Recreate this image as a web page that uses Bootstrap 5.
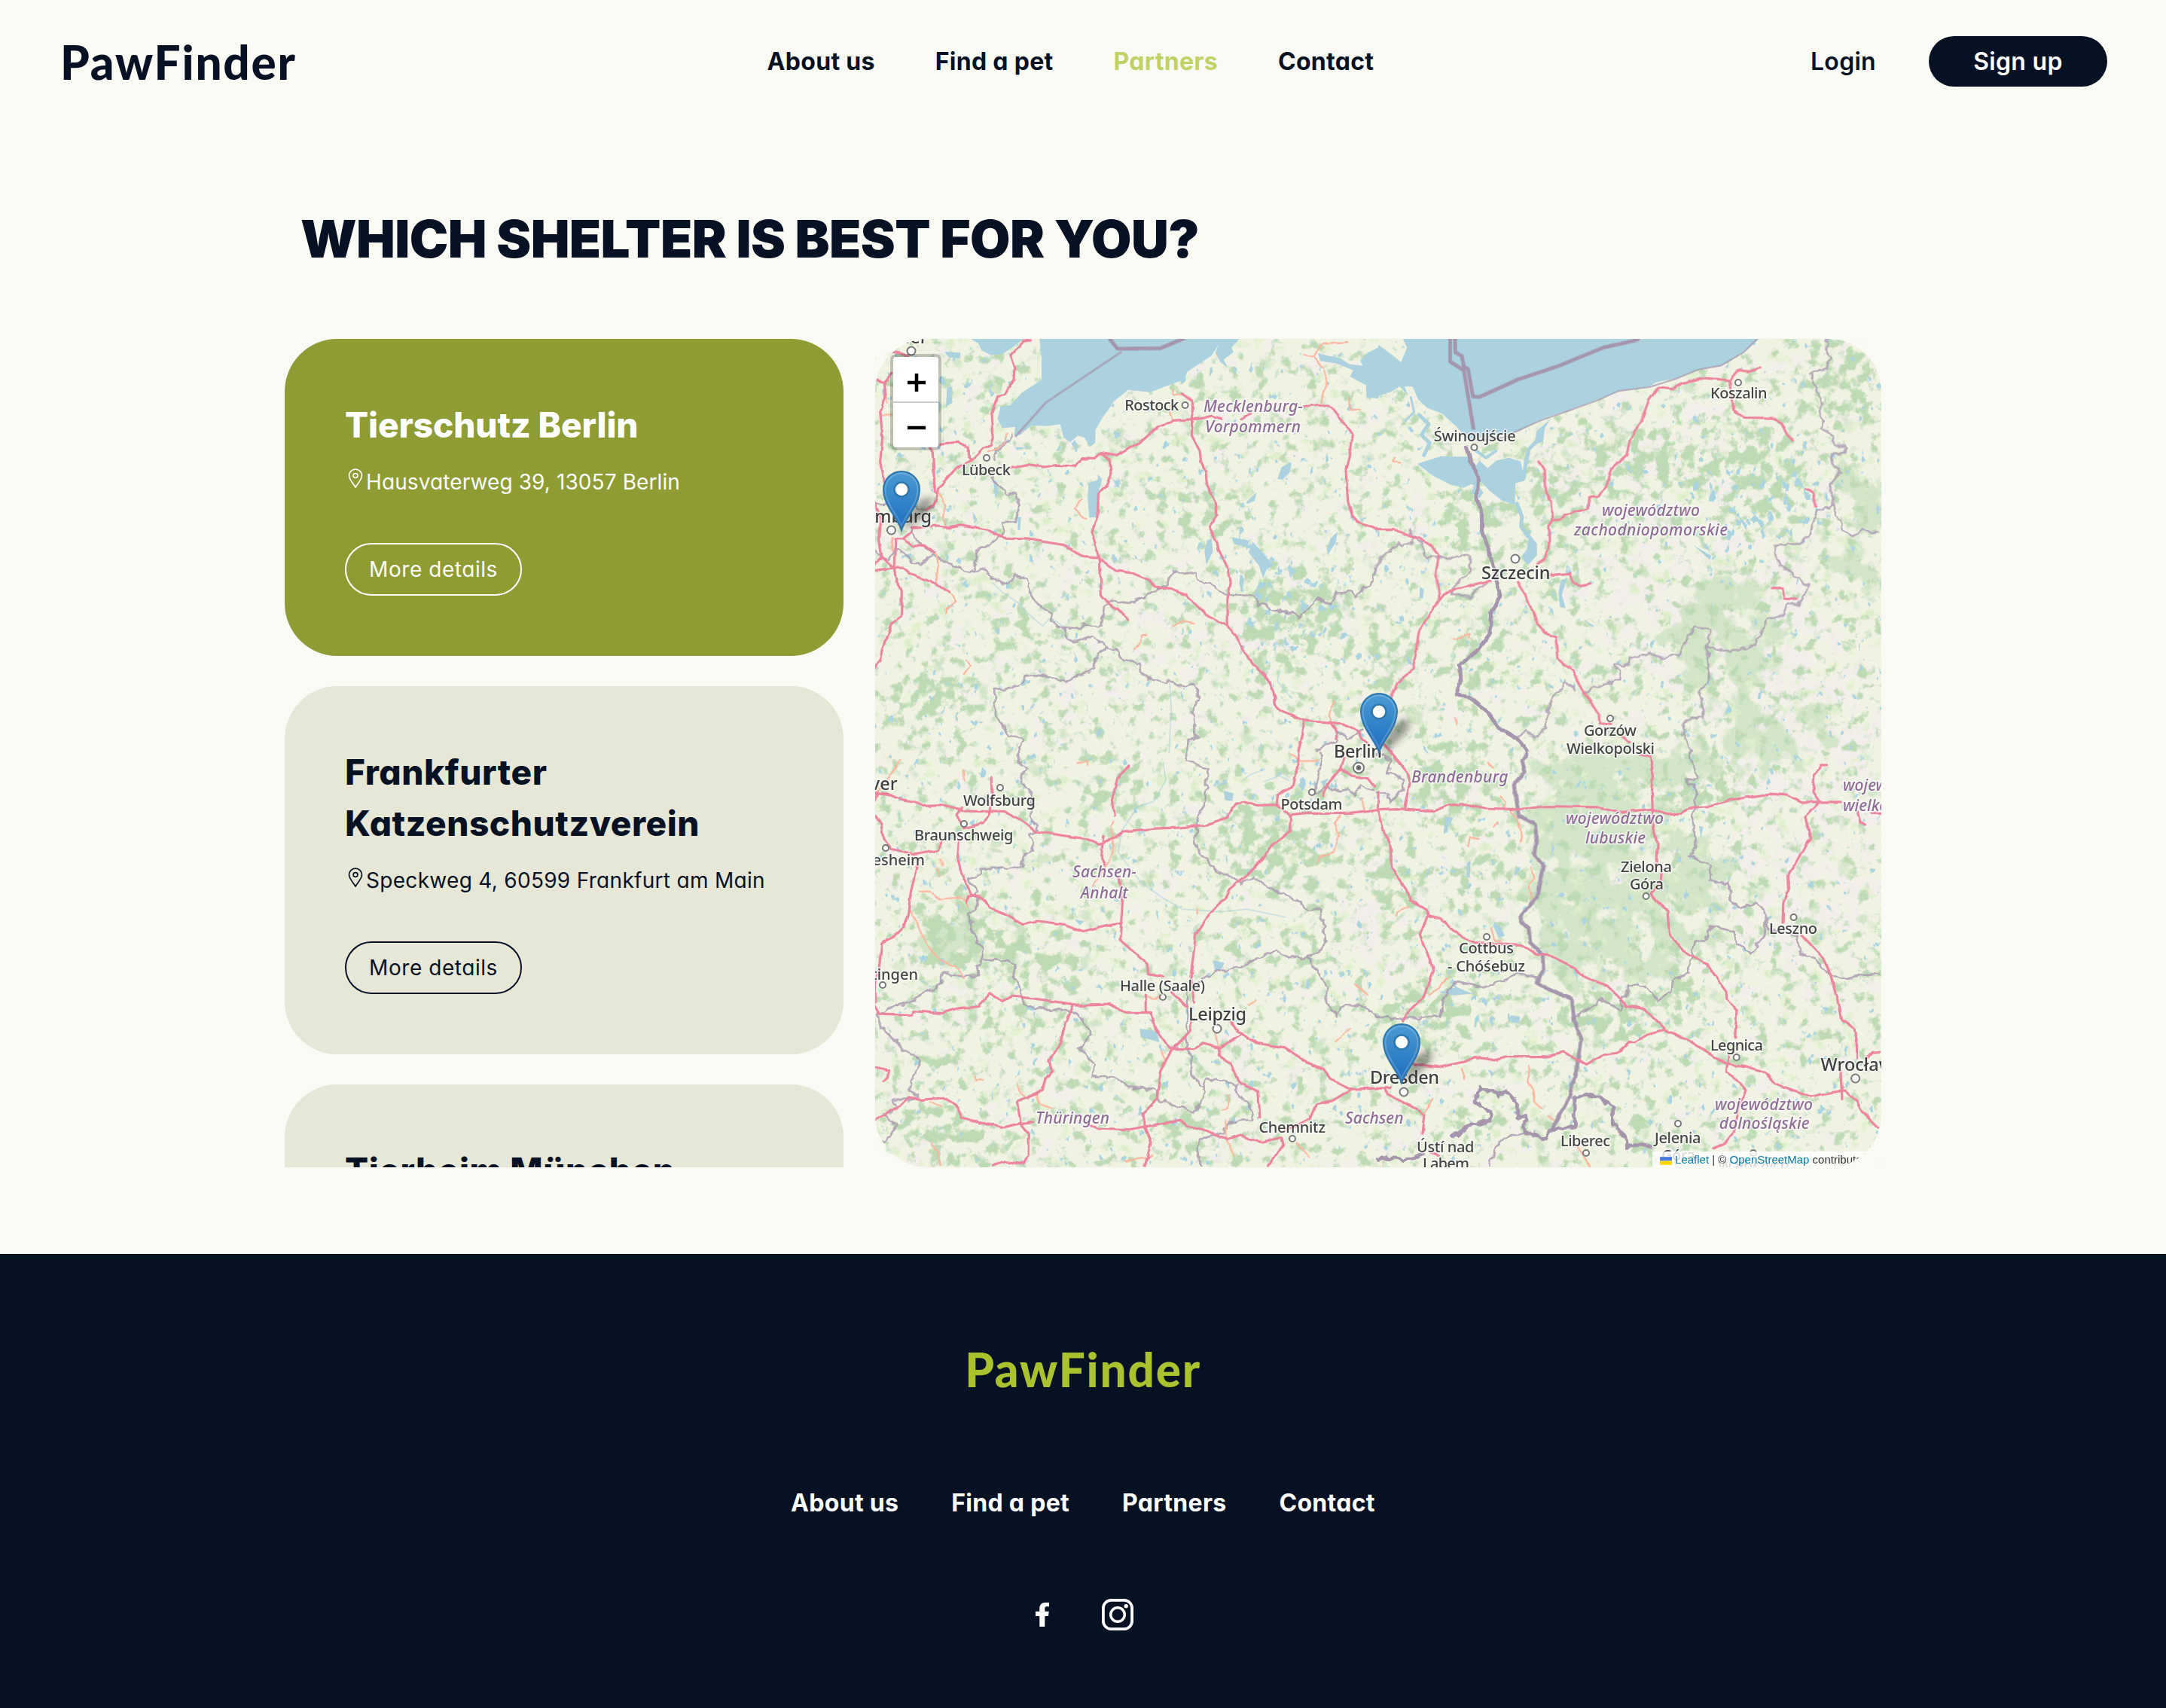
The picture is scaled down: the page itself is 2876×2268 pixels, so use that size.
<!DOCTYPE html>
<html lang="en">
<head>
<meta charset="utf-8">
<meta name="viewport" content="width=device-width, initial-scale=1">
<title>PawFinder – Partners</title>
<link href="https://cdn.jsdelivr.net/npm/bootstrap@5.3.0/dist/css/bootstrap.min.css" rel="stylesheet">
<style>
  :root { --ink: #071124; --paper: #fafaf5; --olive: #8e9c33; --sand: #e6e7d7; --lime: #abc22f; }
  body { background: var(--paper); color: var(--ink); font-family: Inter, "Open Sans", sans-serif; font-feature-settings: "cv11"; }
  a { color: inherit; text-decoration: none; }
  .site-header { height: 163px; padding: 0 78px 0 80px; }
  .logo { font-family: Lato, sans-serif; font-weight: 900; font-size: 62px; line-height: 72px; letter-spacing: 1.8px; white-space: nowrap; }
  .site-header .logo { width: 359px; }
  .menu { font-size: 32px; line-height: 48px; font-weight: 700; letter-spacing: .3px; white-space: nowrap; }
  .site-header .menu { gap: 80px; }
  .menu .active { color: #c0d264; }
  .site-header .account { gap: 70px; font-weight: 600; }
  .signup { background: var(--ink); color: #fff; width: 237px; height: 67px; }
  .page { width: 2120px; }
  .page-title { font-size: 69px; font-weight: 900; line-height: 108px; letter-spacing: -.55px; margin: 100px 0 79px 21px; white-space: nowrap; }
  .split { height: 1100px; gap: 42px; }
  .shelters { width: 742px; gap: 40px; overflow: hidden; }
  .shelter { background: var(--sand); border-radius: 70px; padding: 80px; flex: none; }
  .shelter.chosen { background: var(--olive); color: #fff; }
  .shelter h2 { font-size: 46px; line-height: 68.700px; font-weight: 800; letter-spacing: .55px; margin: 0 0 20px; }
  .shelter.chosen h2 { letter-spacing: -.1px; }
  .address { font-size: 28px; line-height: 42px; letter-spacing: .3px; margin: 0 0 60px; white-space: nowrap; padding-left: 4px; }
  .chosen .address { letter-spacing: .1px; }
  .address svg { width: 20px; height: 27px; margin: -8px 4px 0 0; flex: none; }
  .details { width: 235px; height: 70px; border: 2px solid currentColor; font-size: 28px; letter-spacing: .55px; }
  .map { width: 1336px; border-radius: 70px; overflow: hidden; background: #f1f3e2; }
  .map > svg { display: block; width: 1336px; height: 1100px; }
  .zoomer { left: 20px; top: 20px; width: 68px; border: 4px solid rgba(0,0,0,.2); border-radius: 8px; background-clip: padding-box; background-color: #fff; }
  .zoomer svg { display: block; width: 60px; height: 59px; }
  .zoomer svg + svg { border-top: 2px solid #ccc; height: 61px; }
  .credit { right: 0; bottom: 0; padding: 0 13px 0 10px; background: rgba(255,255,255,.8); color: #333; font: 15px/21px "Liberation Sans", sans-serif; white-space: nowrap; }
  .credit a { color: #0078a8; }
  .credit svg { width: 16px; height: 11px; margin-right: 4px; }
  .site-footer { background: var(--ink); color: #fff; height: 603px; margin-top: 115px; padding-top: 117px; }
  .site-footer .logo { color: var(--lime); }
  .site-footer .menu { gap: 70px; margin-top: 118px; }
  .social { gap: 70px; margin: 103px 0 0 4px; }
  .road { fill: none; stroke: #ee859f; stroke-width: 3.2; stroke-linejoin: round; stroke-linecap: round; }
  .trunk { fill: none; stroke: #fbb49e; stroke-width: 2.2; stroke-linejoin: round; stroke-linecap: round; }
  .edge { fill: none; stroke: #a898ae; stroke-width: 2.8; stroke-linejoin: round; opacity: .8; }
  .nation { fill: none; stroke: #a596ae; stroke-width: 5; stroke-linejoin: round; }
  .sea { fill: #abd2de; }
  .river { fill: none; stroke: #abd2de; stroke-width: 5; stroke-linecap: round; stroke-linejoin: round; }
  .road path, .trunk path, .edge path, .nation path, .river path { vector-effect: non-scaling-stroke; }
  .place text { font-family: "Noto Sans", sans-serif; font-size: 20px; font-weight: 500; fill: #444; stroke: #fff; stroke-opacity: .65; stroke-width: 3.5px; paint-order: stroke; stroke-linejoin: round; }
  .place .big { font-size: 23.5px; fill: #3e3e3e; }
  .place .region { font-style: italic; fill: #8f6c96; font-size: 21px; }
  .dots circle { fill: #fff; stroke: #777; stroke-width: 2; }
</style>
</head>
<body>
<header class="site-header d-flex align-items-center justify-content-between">
  <a class="logo" href="#">PawFinder</a>
  <nav class="menu d-flex">
    <a href="#">About us</a><a href="#">Find a pet</a><a class="active" href="#">Partners</a><a href="#">Contact</a>
  </nav>
  <div class="account menu d-flex align-items-center">
    <a href="#">Login</a>
    <a class="signup rounded-pill d-flex align-items-center justify-content-center" href="#">Sign up</a>
  </div>
</header>

<main class="page mx-auto">
  <h1 class="page-title">WHICH SHELTER IS BEST FOR YOU?</h1>
  <div class="split d-flex">
    <section class="shelters d-flex flex-column">
      <article class="shelter chosen">
        <h2>Tierschutz Berlin</h2>
        <p class="address d-flex align-items-center"><svg viewBox="0 0 20 27" fill="none" stroke="currentColor" stroke-width="1.7" stroke-linejoin="round"><path d="M10 25C6.500 19.500 1.500 14.500 1.500 9.600A8.500 8.500 0 0 1 18.500 9.600C18.500 14.500 13.500 19.500 10 25Z"/><circle cx="10" cy="9.600" r="2.900"/></svg><span>Hausvaterweg 39, 13057 Berlin</span></p>
        <a class="details rounded-pill d-flex align-items-center justify-content-center" href="#">More details</a>
      </article>
      <article class="shelter">
        <h2>Frankfurter Katzenschutzverein</h2>
        <p class="address d-flex align-items-center"><svg viewBox="0 0 20 27" fill="none" stroke="currentColor" stroke-width="1.7" stroke-linejoin="round"><path d="M10 25C6.500 19.500 1.500 14.500 1.500 9.600A8.500 8.500 0 0 1 18.500 9.600C18.500 14.500 13.500 19.500 10 25Z"/><circle cx="10" cy="9.600" r="2.900"/></svg><span>Speckweg 4, 60599 Frankfurt am Main</span></p>
        <a class="details rounded-pill d-flex align-items-center justify-content-center" href="#">More details</a>
      </article>
      <article class="shelter">
        <h2>Tierheim München</h2>
      </article>
    </section>

    <section class="map position-relative">
      <svg viewBox="1162 450 1336 1100">
        <defs>
          <filter id="woods" filterUnits="userSpaceOnUse" x="1162" y="450" width="1336" height="1100" color-interpolation-filters="sRGB">
            <feGaussianBlur in="SourceGraphic" stdDeviation="16" result="d"/>
            <feTurbulence type="fractalNoise" baseFrequency="0.06" numOctaves="5" seed="7" result="n"/>
            <feComposite in="n" in2="d" operator="arithmetic" k2="1" k3="0.26"/>
            <feColorMatrix values="0 0 0 0 .74  0 0 0 0 .855  0 0 0 0 .71  0 0 0 6.5 -3.95"/>
          </filter>
          <filter id="pale" filterUnits="userSpaceOnUse" x="1162" y="450" width="1336" height="1100" color-interpolation-filters="sRGB">
            <feGaussianBlur in="SourceGraphic" stdDeviation="30" result="d"/>
            <feTurbulence type="fractalNoise" baseFrequency="0.03" numOctaves="5" seed="21" result="n"/>
            <feComposite in="n" in2="d" operator="arithmetic" k2="1" k3="0.25"/>
            <feColorMatrix values="0 0 0 0 .949  0 0 0 0 .937  0 0 0 0 .918  0 0 0 7 -4.1"/>
          </filter>
          <filter id="mist" filterUnits="userSpaceOnUse" x="1162" y="450" width="1336" height="1100" color-interpolation-filters="sRGB">
            <feGaussianBlur in="SourceGraphic" stdDeviation="22" result="d"/>
            <feTurbulence type="fractalNoise" baseFrequency="0.03" numOctaves="6" seed="3" result="n"/>
            <feComposite in="n" in2="d" operator="arithmetic" k2="1" k3="0.4"/>
            <feColorMatrix values="0 0 0 0 .826  0 0 0 0 .897  0 0 0 0 .786  0 0 0 8 -5.5"/>
          </filter>
          <filter id="meadow" filterUnits="userSpaceOnUse" x="1162" y="450" width="1336" height="1100" color-interpolation-filters="sRGB">
            <feTurbulence type="fractalNoise" baseFrequency="0.045" numOctaves="4" seed="40"/>
            <feColorMatrix values="0 0 0 0 .87  0 0 0 0 .935  0 0 0 0 .8  0 0 0 6 -3.8"/>
          </filter>
          <filter id="ponds" filterUnits="userSpaceOnUse" x="1162" y="450" width="1336" height="1100" color-interpolation-filters="sRGB">
            <feGaussianBlur in="SourceGraphic" stdDeviation="20" result="d"/>
            <feTurbulence type="fractalNoise" baseFrequency="0.09 0.06" numOctaves="3" seed="12" result="n"/>
            <feComposite in="n" in2="d" operator="arithmetic" k2="1" k3="0.12"/>
            <feColorMatrix values="0 0 0 0 .67  0 0 0 0 .83  0 0 0 0 .88  0 0 0 14 -10.2"/>
          </filter>
          <filter id="jag" filterUnits="userSpaceOnUse" x="1162" y="450" width="1336" height="1100">
            <feTurbulence type="fractalNoise" baseFrequency="0.09" numOctaves="2" seed="5" result="n"/>
            <feDisplacementMap in="SourceGraphic" in2="n" scale="14" xChannelSelector="R" yChannelSelector="G" color-interpolation-filters="sRGB"/>
          </filter>
          <filter id="wobble" filterUnits="userSpaceOnUse" x="1162" y="450" width="1336" height="1100">
            <feTurbulence type="fractalNoise" baseFrequency="0.06" numOctaves="2" seed="9" result="n"/>
            <feDisplacementMap in="SourceGraphic" in2="n" scale="7" xChannelSelector="R" yChannelSelector="G" color-interpolation-filters="sRGB"/>
          </filter>
          <filter id="soft" x="-50%" y="-50%" width="200%" height="200%"><feGaussianBlur stdDeviation="5"/></filter>
          <linearGradient id="pinFill" x1="0" y1="0" x2="0" y2="1"><stop offset="0" stop-color="#4a9bd3"/><stop offset="1" stop-color="#1d6cc0"/></linearGradient>
          <g id="pin">
            <path d="M2 0L10-22Q22-42 38-44Q46-38 34-24Q20-8 2 0Z" fill="#222" opacity=".42" filter="url(#soft)"/>
            <path d="M0 0C-5-16-24-33-24-54A24 24 0 0 1 24-54C24-33 5-16 0 0Z" fill="url(#pinFill)" stroke="#2e76ab" stroke-width="2"/>
            <path d="M0-6C-5-20-21.500-35-21.500-54A21.500 21.500 0 0 1 21.500-54C21.500-35 5-20 0-6Z" fill="none" stroke="#fff" stroke-opacity=".18" stroke-width="2"/>
            <circle cy="-54" r="9.500" fill="#fff" stroke="#2e76ab" stroke-width="2.500"/>
          </g>
        </defs>

        <rect x="1162" y="450" width="1336" height="1100" fill="#f1f3e2"/>
        <g filter="url(#pale)" fill-opacity=".7">
          <ellipse cx="2260" cy="800" rx="160" ry="100"/><ellipse cx="2400" cy="960" rx="130" ry="150"/><ellipse cx="1590" cy="860" rx="60" ry="60"/><ellipse cx="1800" cy="1020" rx="40" ry="30"/><ellipse cx="2400" cy="1190" rx="110" ry="110"/><ellipse cx="2160" cy="620" rx="140" ry="60"/><ellipse cx="1190" cy="690" rx="40" ry="60"/><ellipse cx="1810" cy="1230" rx="60" ry="50"/>
        </g>
        <g filter="url(#mist)">
          <ellipse cx="2290" cy="850" rx="80" ry="90"/><ellipse cx="2110" cy="1130" rx="90" ry="150"/><ellipse cx="2140" cy="1250" rx="110" ry="60"/><ellipse cx="2330" cy="990" rx="120" ry="30" transform="rotate(-15 2330 990)"/><ellipse cx="2170" cy="1040" rx="100" ry="35"/><ellipse cx="2470" cy="700" rx="30" ry="120"/><ellipse cx="2250" cy="1180" rx="50" ry="70"/><ellipse cx="1270" cy="1250" rx="50" ry="50"/>
        </g>
        <rect filter="url(#meadow)" x="1162" y="450" width="1336" height="1100"/>
        <g filter="url(#woods)">
          <rect x="1162" y="450" width="1336" height="1100" fill-opacity=".1"/>
          <g fill-opacity=".75">
            <ellipse cx="1260" cy="1245" rx="45" ry="50"/><ellipse cx="1365" cy="1275" rx="75" ry="32" transform="rotate(25 1365 1275)"/>
            <ellipse cx="1240" cy="925" rx="55" ry="38" transform="rotate(-30 1240 925)"/><ellipse cx="1334" cy="835" rx="24" ry="15"/>
            <ellipse cx="1480" cy="1045" rx="45" ry="28"/><ellipse cx="1600" cy="685" rx="60" ry="22" transform="rotate(30 1600 685)"/>
            <ellipse cx="2190" cy="610" rx="90" ry="30"/><ellipse cx="2330" cy="620" rx="60" ry="60"/><ellipse cx="2450" cy="510" rx="45" ry="60"/>
            <ellipse cx="1960" cy="690" rx="40" ry="45"/><ellipse cx="2065" cy="760" rx="16" ry="40"/><ellipse cx="2060" cy="650" rx="26" ry="50"/>
            <ellipse cx="1720" cy="810" rx="75" ry="60"/><ellipse cx="1680" cy="870" rx="30" ry="30"/><ellipse cx="1745" cy="925" rx="12" ry="20"/>
            <ellipse cx="2130" cy="1350" rx="60" ry="40"/><ellipse cx="2225" cy="1325" rx="36" ry="34"/><ellipse cx="1970" cy="1170" rx="36" ry="28"/>
            <ellipse cx="1690" cy="1120" rx="80" ry="50" transform="rotate(20 1690 1120)"/><ellipse cx="1655" cy="1260" rx="24" ry="20"/><ellipse cx="1745" cy="1260" rx="18" ry="22"/>
            <ellipse cx="1260" cy="1510" rx="80" ry="30" transform="rotate(20 1260 1510)"/><ellipse cx="1250" cy="1405" rx="12" ry="40" transform="rotate(-15 1250 1405)"/>
            <ellipse cx="1320" cy="1350" rx="80" ry="12"/><ellipse cx="1425" cy="1385" rx="12" ry="26" transform="rotate(-30 1425 1385)"/><ellipse cx="1570" cy="1500" rx="50" ry="26"/>
            <ellipse cx="1850" cy="880" rx="36" ry="45"/><ellipse cx="1965" cy="860" rx="26" ry="40"/><ellipse cx="1950" cy="890" rx="20" ry="14"/>
            <ellipse cx="1930" cy="1040" rx="50" ry="50"/><ellipse cx="1850" cy="1170" rx="34" ry="50"/><ellipse cx="1900" cy="1350" rx="70" ry="40"/>
            <ellipse cx="1960" cy="1500" rx="34" ry="16"/><ellipse cx="2180" cy="1505" rx="30" ry="22"/><ellipse cx="2260" cy="900" rx="16" ry="16"/><ellipse cx="2260" cy="1050" rx="70" ry="26"/><ellipse cx="1590" cy="510" rx="20" ry="16"/><ellipse cx="1370" cy="845" rx="14" ry="35" transform="rotate(-30 1370 845)"/>
          </g>
          <ellipse cx="2200" cy="640" rx="250" ry="100" fill-opacity=".15"/>
        </g>
        <g filter="url(#ponds)">
          <ellipse cx="1720" cy="810" rx="60" ry="50"/><ellipse cx="1660" cy="750" rx="50" ry="30"/><ellipse cx="1740" cy="1040" rx="60" ry="25"/><ellipse cx="1960" cy="1330" rx="50" ry="30"/><ellipse cx="2290" cy="680" rx="80" ry="50"/><ellipse cx="1230" cy="520" rx="50" ry="50"/><ellipse cx="2390" cy="650" rx="40" ry="60"/>
        </g>

        <!-- Sea, lagoons, lakes -->
        <g class="sea">
          <g transform="translate(1160 440) scale(.4273 .35714)">
            <path d="M515 26L522 100 522 180 490 205 460 228 425 275 395 280 385 325 400 360 440 355 436 390 455 385 490 350 540 352 580 345 590 395 610 412 635 388 655 395 672 430 688 415 690 365 712 320 730 290 745 262 790 218 860 226 940 190 965 180 975 150 1050 90 1085 26Z"/>
            <path d="M1080 26H1138L1112 60 1118 78 1088 105 1102 138 1078 115 1062 80Z"/>
            <path d="M300 26H470L430 60 400 85 365 88 335 70 325 45Z"/><path d="M220 75L270 80 268 100 235 98Z"/>
            <path d="M1568 60L1535 80 1512 110 1520 128 1478 122 1450 100 1410 90 1380 80 1388 110 1440 120 1490 145 1480 168 1530 200 1532 245 1568 250Z"/>
            <path d="M668 565L710 545 698 600 694 690 670 692 665 620Z"/><path d="M1165 822L1178 782 1212 828 1242 868 1222 885 1210 918 1197 870Z"/>
            <path d="M1255 548L1268 505 1298 485 1293 525 1270 552Z"/><path d="M1036 780L1050 768 1054 820 1034 868 1028 820Z"/><path d="M1408 812L1420 770 1442 745 1436 785 1412 830Z"/><path d="M1158 635L1190 598 1184 630 1160 642Z"/><path d="M1112 765L1168 778 1160 800 1120 790Z"/><path d="M372 550L384 560 386 600 378 622Z"/><path d="M228 210L245 205 238 270 225 280Z"/><path d="M740 830L750 830 745 862Z"/><path d="M440 430L470 432 445 442Z"/><path d="M448 690L458 690 455 740 448 738Z"/>
          </g>
          <g transform="translate(1830 440) scale(.43367 .35714)">
            <path d="M75 26L88 60 70 115 40 85 0 50V240L40 225 65 205 92 238 80 205 105 205 122 252 150 285 195 305 240 355 275 402 350 390 425 375 500 326 590 290 670 255 735 222 830 205 850 190 910 175 980 142 1050 127 1120 75 1168 26Z"/>
            <path d="M120 492L190 465 278 466 300 500 310 480 335 508 362 480 400 470 436 484 448 555 420 565 418 645 380 630 340 592 310 550 296 575 285 568 262 582 220 570 165 535Z"/><path d="M285 600L298 560 322 600 310 620Z"/><path d="M462 752L486 790 486 832 458 870 438 838 455 810Z"/><path d="M560 925L578 918 562 980 574 1030 556 1025 552 970Z"/><path d="M628 1072L662 1095 655 1100Z"/><path d="M965 795L1020 835 1015 850Z"/><path d="M128 950L140 960 136 995 126 990Z"/><path d="M1100 680L1130 720 1125 738Z"/><path d="M485 372L528 325 510 360 505 410 480 420Z"/>
          </g>
          <g transform="translate(1160 1000) scale(.4273 .35714)"><path d="M826 1025L880 1035 888 1075 830 1055Z"/><path d="M1055 770L1090 780 1080 805 1060 808Z"/><path d="M1088 140L1118 150 1115 178 1092 175Z"/><path d="M1390 105L1412 95 1400 125Z"/><path d="M625 618L655 625 640 640Z"/><path d="M473 938L490 938 488 955 473 952Z"/></g>
          <g transform="translate(1830 1000) scale(.43367 .35714)"><path d="M352 640L372 640 388 680 368 686Z"/><path d="M405 975L435 980 430 1005 408 1000Z"/><path d="M272 408L283 400 280 465 270 460Z"/><path d="M205 240L216 238 212 295 200 300Z"/><path d="M1015 550L1050 580 1045 588Z"/><path d="M185 890L240 870 290 895 230 900Z"/><path d="M982 270L995 275 988 315Z"/><path d="M590 1215L598 1218 590 1245 578 1240Z"/></g>
        </g>
        <g class="river">
          <g transform="translate(1830 440) scale(.43367 .35714)"><path d="M425 640L440 690 437 725 458 762"/><path d="M495 395L460 440 450 500 446 545"/><path d="M125 310L155 345 132 385 158 415 140 460"/><path d="M100 245L110 300 85 330" stroke-width="3"/><path d="M300 445L330 470 360 445" stroke-width="4"/></g>
          <g stroke-width="1.500" opacity=".7"><g transform="translate(1160 440) scale(.4273 .35714)"><path d="M370 935L400 970 450 1010 490 1060 525 1095 550 1065 600 1105"/><path d="M920 1310L925 1400 918 1568"/><path d="M1262 1260L1255 1300 1295 1360"/></g><g transform="translate(1160 1000) scale(.4273 .35714)"><path d="M900 40L908 100 870 180 820 200 770 290 760 370 830 480 900 540 960 580 1080 590 1160 580 1280 610"/><path d="M1145 105L1170 80 1215 60"/><path d="M1215 105L1260 85 1290 100"/></g></g>
        </g>

        <!-- State and national borders -->
        <g class="edge">
          <g transform="translate(1160 440) scale(.4273 .35714)"><path d="M770 76L535 265 440 392"/></g>
          <g transform="translate(1830 440) scale(.43367 .35714)"><path d="M300 405L380 395 500 330 590 292 670 257 735 222 830 207 910 177 980 142 1050 127 1120 77 1160 28" stroke-width="2"/></g>
        </g>
        <g class="edge" filter="url(#jag)">
          <g transform="translate(1160 440) scale(.4273 .35714)">
            <path d="M440 392L380 465 383 490M378 545L385 570 420 610 450 612 460 655 448 720 410 722 408 765 375 800 330 825 315 902"/>
            <path d="M5 820L25 840 55 860 80 820 100 832 130 870 160 872 190 838 235 870 285 895 315 902 355 895 390 935 415 950 450 918 480 930 495 980 520 1030 560 1055 560 1090 595 1108 650 1115 655 1095 700 1105 718 1100 722 1040 745 1010 795 1022 850 995 900 960 918 955 935 900 975 915 1005 910 1015 930 1045 940 1080 965 1100 990 1160 990 1190 1000 1205 1020 1230 1025 1240 1045 1290 1050 1330 1070 1360 1040 1385 1005 1430 1025 1450 980 1490 975 1505 1000 1530 960 1550 955 1568 890"/>
            <path d="M595 1108L605 1140 632 1165 680 1145 735 1178 760 1190 780 1225 835 1245 838 1280 880 1308 925 1310 970 1330 1000 1322 1018 1370 998 1425 1010 1520 985 1530 982 1568"/><path d="M735 1178L700 1212 695 1260 610 1312 555 1295 480 1285 475 1310 435 1335 385 1342 382 1400 395 1450 430 1510 470 1530 460 1568"/>
            <path d="M10 655L60 650 120 640 145 670 190 665M120 740L145 790 190 830"/><path d="M1380 1568L1440 1530 1450 1500 1480 1520 1530 1490"/>
          </g>
          <g transform="translate(1830 440) scale(.43367 .35714)">
            <path d="M0 890L10 865 40 830 70 798 110 802 118 780 100 770 105 738 110 768 140 790 155 845 220 855 250 838 290 848 290 900 235 965 235 985 290 995 315 965 345 945"/>
            <path d="M1378 28L1378 70 1392 110 1380 145 1332 165 1345 220 1362 260 1365 370 1395 390 1400 420 1440 440 1435 462 1395 465 1398 500 1425 530 1392 575 1400 655 1430 740 1460 770 1490 748 1540 760"/><path d="M1400 655L1350 680 1328 770 1300 798 1220 805 1230 870 1325 955 1290 1030 1265 1020 1245 1065 1200 1080 1160 1175 1080 1200 1015 1180 1025 1115 970 1110 930 1210 875 1225 840 1205 780 1225 762 1255 732 1248 748 1298 640 1352"/>
            <path d="M1015 1180L1020 1300 990 1360 1008 1440 945 1455 940 1510 960 1568"/><path d="M615 1340L575 1305 570 1340 550 1350 525 1420 520 1490 490 1520 460 1498 430 1515"/>
          </g>
          <g transform="translate(1160 1000) scale(.4273 .35714)">
            <path d="M458 0L460 40 484 66 462 110 500 160 495 240 518 300 490 312 508 345 500 370 465 400 470 430 340 442 325 470 300 478 330 520 320 535 332 572 305 610 310 660 345 740 348 775 330 800 335 835 285 840 220 820 215 870 150 910 120 935 70 950 22 978 30 1030 80 1080 95 1110 155 1150 135 1190 120 1255 145 1290 120 1300 70 1295 75 1330 40 1355 80 1390 60 1440 30 1450"/>
            <path d="M348 775L410 778 450 800 440 840 465 890 475 940 490 955 560 962 620 970 650 990 685 1050 645 1110 690 1160 685 1215 750 1210 800 1250 880 1260 900 1300 950 1325 1005 1340 1030 1290 1035 1250 1000 1210 990 1130 975 1060 985 990 978 900 1050 828 1150 800 1210 765 1260 745 1300 770 1360 768 1400 740 1412 710 1395 590 1350 585 1320 550 1270 530 1190 475 1150 490 1110 465 1080 455 1030 390 1005 345 1010 280 1035 200 1045 70 980 35 978 0"/>
            <path d="M1360 768L1395 840 1420 880 1415 940 1445 980 1475 945 1540 950 1568 990"/><path d="M1035 1250L1040 1220 1130 1240 1145 1290 1175 1310 1185 1370 1110 1380 1090 1420 1020 1445 1015 1500 1020 1540"/><path d="M1395 0L1400 40 1385 110 1380 155 1420 135 1440 150 1480 140 1505 165 1520 130 1560 150"/>
          </g>
          <g transform="translate(1830 1000) scale(.43367 .35714)">
            <path d="M0 20L20 10 45 40 35 80 90 110 75 150 45 195 35 155 0 155"/><path d="M960 0L970 50 985 100 950 110 985 155 970 260 982 355 962 390 1000 415 1028 430 1022 480 1050 495 1082 490 1085 560 1120 585 1165 565 1195 610 1190 690 1145 750 1105 715 1100 680 1040 650 1020 655 1020 690 980 710 960 790 955 830 910 855 905 890 862 932 820 875 775 872 770 910 750 920 750 965 690 925 650 965 620 975 610 1010"/>
            <path d="M1195 610L1200 660 1290 690 1300 760 1350 775 1380 825 1440 850 1480 835 1540 832"/><path d="M495 845L435 832 380 860 330 880 245 860 210 920 195 985 100 998 0 990"/><path d="M515 1445L450 1420 380 1450 345 1540"/>
          </g>
        </g>
        <g class="nation">
          <g transform="translate(1160 440) scale(.4273 .35714)"><path d="M732 26L758 65 890 63 965 26"/></g>
          <g transform="translate(1830 440) scale(.43367 .35714)"><path d="M220 26V112L262 145 292 365"/><path d="M235 26L236 78 256 92 262 130 275 140 290 242 310 244 430 178 545 132 690 60 780 36 800 26"/></g>
        </g>
        <g class="nation" filter="url(#wobble)">
          <g transform="translate(1830 440) scale(.43367 .35714)"><path d="M272 428L285 485 308 545 305 620 322 690 322 750 345 830 365 920 378 985 350 1050 345 1130 300 1200 252 1245 256 1310 243 1355 280 1362 340 1420 375 1480 430 1520 462 1568"/></g>
          <g transform="translate(1830 1000) scale(.43367 .35714)"><path d="M460 0L445 30 455 75 420 120 435 240 485 270 488 310 480 380 510 420 490 540 440 610 442 630 465 655 470 710 508 755 510 810 490 860 560 900 595 915 602 1000 625 1070 612 1180 590 1280 545 1380 535 1410"/></g>
        </g>
        <g class="nation" filter="url(#jag)">
          <g transform="translate(1830 1000) scale(.43367 .35714)"><path d="M535 1410L610 1400 608 1290 640 1280 690 1290 725 1330 725 1385 765 1440 770 1480 790 1460 850 1475"/><path d="M535 1410L520 1442 455 1415 460 1360 432 1358 435 1310 400 1265 375 1280 320 1255 302 1305 355 1345 350 1375 290 1390 230 1440"/><path d="M0 1518L60 1515 90 1520 130 1510 145 1495"/></g>
        </g>

        <!-- Roads -->
        <g class="trunk" filter="url(#wobble)">
          <g transform="translate(1160 440) scale(.4273 .35714)"><path d="M935 225L938 240 962 236M928 280L925 310 935 338"/><path d="M1340 92L1368 100 1400 50 1475 45M1368 100L1402 140 1410 210 1395 270"/><path d="M650 630L628 658 655 702 665 705"/><path d="M1482 252V295L1515 298"/><path d="M418 385L412 415 385 440 360 452"/><path d="M205 600L228 655 220 690 228 725"/><path d="M190 830L205 870 200 940M240 975L260 1010 232 1035 230 1052"/><path d="M935 1100L960 1082 998 1090"/><path d="M852 1133L838 1135 830 1170 812 1190"/><path d="M290 1225L308 1245 285 1280"/><path d="M1435 1382L1420 1430 1425 1460"/><path d="M62 770L60 820M30 315H60M40 230L46 270"/></g>
          <g transform="translate(1830 440) scale(.43367 .35714)"><path d="M55 475L48 485 70 495"/><path d="M235 1150L285 1130 282 1145"/><path d="M238 1440L243 1465"/></g>
          <g transform="translate(1160 1000) scale(.4273 .35714)"><path d="M85 30L45 105 18 145"/><path d="M282 65L285 105"/><path d="M635 40L665 35 668 50"/><path d="M750 260L740 280 750 350 735 410 700 470 685 500"/><path d="M145 520H180L210 545 265 540 285 550 298 575"/><path d="M115 590L140 640 160 700 210 775 260 800 285 840"/><path d="M210 400L218 425M200 430L210 462"/><path d="M850 905L880 918 898 900"/><path d="M1455 235L1435 265 1445 310 1432 375 1390 390 1385 410"/><path d="M1065 1040L1075 1095"/><path d="M450 1230L460 1270 485 1290M510 1275L520 1310 555 1325"/><path d="M1485 1030L1440 1078M1500 865L1540 905M1008 580V600M1190 925L1170 940"/><path d="M180 1300L215 1320M185 1455L205 1490 212 1535M785 1520L850 1508 868 1500M1095 1370L1100 1440 1125 1500M1320 1455L1360 1505M1108 1280L1105 1320 1085 1330M320 1205V1220L345 1218M895 1110L910 1145"/><path d="M1300 10L1330 35H1380M1520 170L1530 215"/></g>
          <g transform="translate(1830 1000) scale(.43367 .35714)"><path d="M380 170L395 190 385 210M410 220L430 250 442 310 440 335"/><path d="M310 322L285 318 280 355M370 260L358 280"/><path d="M470 430L480 470 465 500 475 550"/><path d="M98 575L60 595 58 608M218 840L160 905"/><path d="M350 655L360 700 380 705"/><path d="M465 1168L462 1225 478 1260 482 1300 505 1325M258 1180L268 1215M525 1355L540 1370M172 1290L145 1340M612 1465L632 1500 650 1540M340 40L355 60"/></g>
        </g>
        <g class="road" filter="url(#wobble)">
          <g transform="translate(1160 440) scale(.4273 .35714)">
            <path d="M60 82L110 92M490 36L468 40 430 95 442 140 440 185 410 240 390 245 370 315 375 400 368 430 345 440 310 482 298 470 298 435 265 418 210 423"/>
            <path d="M5 182L38 192 60 160M38 192L42 240 25 300 32 400 25 490 35 560"/><path d="M175 430L188 455 195 600"/><path d="M310 482L262 510 205 590 190 650 165 670"/>
            <path d="M425 512L485 500 535 510 575 502 630 508 650 475 690 478 712 455 758 466 800 435 830 420 890 355 935 337 1020 330 1055 320 1085 330"/><path d="M962 234L993 262 994 395 1018 450 1022 490 1036 525 1040 570 1065 640 1070 690 1045 732 1070 790 1075 820 1105 890 1112 940 1102 1000 1103 1095"/>
            <path d="M1145 332L1175 310M1340 285L1390 278 1430 290 1460 335 1492 385 1482 470 1472 520 1478 630 1492 690 1510 715 1568 738"/>
            <path d="M712 458L738 480 742 530 728 575 703 610 700 690 683 750 705 850 710 985 735 1020 765 1040 795 1078"/>
            <path d="M120 735L200 728 240 733 275 725 355 742 410 773 480 775 595 797 655 842 700 845 755 893 800 900 860 930 880 955 930 962 975 985 1038 1060 1103 1098 1130 1140 1145 1180 1190 1250 1230 1300 1248 1350 1250 1390 1270 1415 1340 1450 1425 1460 1465 1465 1510 1490 1520 1520 1540 1540"/>
            <path d="M5 640L25 700 20 780 28 840 65 885 5 895M28 840L5 875M65 885L95 885 115 905 185 935 240 975"/><path d="M70 775H95L125 800 160 802 190 825M95 775L120 750M72 780L68 885 75 930 92 970 90 1065 60 1090 30 1190 25 1225 5 1255"/><path d="M1340 1450L1335 1510 1322 1568M1425 1460L1440 1490 1440 1520"/>
          </g>
          <g transform="translate(1830 440) scale(.43367 .35714)">
            <path d="M0 741L50 740 100 768 125 770 165 800 190 840 180 910 188 960 192 1000"/><path d="M348 933L240 962 205 985 170 1040 130 1120 118 1200 108 1260 60 1315 42 1365"/>
            <path d="M495 487L512 520 516 600 533 640 537 708 525 730 528 780 515 850 490 870"/><path d="M537 708L560 706 575 688 640 662 650 620 680 618 700 580 718 515 765 465 775 410 800 350 815 320 832 265 862 213 905 218 930 200 985 178 1040 183 1080 188 1105 150 1140 155 1172 142"/><path d="M1080 188L1090 298 1125 326 1215 328 1240 350 1252 380 1272 408"/>
            <path d="M530 912L590 905 600 940 625 950 652 943"/><path d="M430 935L455 985 465 1025 480 1050 490 1090 515 1125 548 1140 553 1220 600 1265 620 1320 635 1350 660 1390 680 1430 682 1460 715 1465M750 1510L775 1535"/><path d="M1313 590L1335 605 1343 655"/><path d="M1210 960H1242L1248 997 1283 1000"/><path d="M8 1530L45 1568"/>
          </g>
          <g transform="translate(1160 1000) scale(.4273 .35714)">
            <path d="M5 152L50 158 85 177 130 185 155 200 215 198 285 218 410 222 475 262 510 298 670 325 705 343 745 325 775 297 890 285 950 283 1035 273 1100 245 1130 195 1155 185 1195 200 1255 198 1258 158 1305 130 1322 50V0"/>
            <path d="M370 95L372 160 360 235 345 265 285 285 262 235 280 205"/><path d="M270 330L265 400 275 450 310 530 330 535 365 578 415 605 465 640 515 630 600 643 655 668 740 642 775 635"/><path d="M292 560L300 535 322 532"/>
            <path d="M5 230L28 270 35 325 55 362 130 380 205 365 215 335M140 420L120 520 112 600 98 650 65 690 30 710 22 800M15 150L5 185"/>
            <path d="M798 52L762 100 745 180 752 238"/><path d="M718 315L712 395 722 420M765 465L778 560 770 700 855 790 858 825 905 835M930 895L975 945"/>
            <path d="M5 940L22 975 120 978 125 965 215 973 265 955 330 945 365 898 405 928 435 910 500 918 640 942 735 938 785 970 865 970 880 1030 925 1105 1000 1105 1025 1083 1080 1100 1150 1048 1200 1085 1280 1100 1360 1160 1400 1180 1425 1218 1490 1255 1568 1252"/>
            <path d="M1490 1255L1430 1298 1380 1310 1360 1365 1280 1410M1115 1005L1135 1040 1150 1048"/>
            <path d="M1075 1100L1078 1130 1115 1160 1140 1230 1200 1265 1205 1360"/><path d="M990 830L1000 740 1005 680 1050 600 1095 545 1110 512 1180 440 1245 348 1298 295 1300 235"/><path d="M1260 200L1300 235 1350 228 1490 228 1568 215"/>
            <path d="M990 830L1000 930M990 1000L985 1040 930 1110 895 1190 885 1290 840 1345 845 1390 865 1450 845 1540"/><path d="M622 945L600 1010 585 1080 550 1150 558 1185 538 1215 530 1255 510 1270 450 1300 462 1385"/>
            <path d="M5 1372L50 1335 75 1328 110 1285 150 1292 220 1285 262 1315 275 1360 315 1372 410 1397 450 1385 500 1375M670 1385L700 1400 800 1405 865 1390 955 1370 980 1392 1040 1410 1100 1442 1145 1425 1210 1452 1270 1435 1275 1460 1230 1540"/><path d="M462 1385L485 1420 485 1500 470 1532 415 1522 375 1538"/><path d="M850 905V970M5 1172L50 1185 48 1210 35 1222M22 800L8 860V930"/><path d="M1465 20L1455 60 1490 90 1540 100 1560 130M1455 60L1415 120 1400 165"/>
          </g>
          <g transform="translate(1830 1000) scale(.43367 .35714)">
            <path d="M42 0L95 80 102 115 85 205M0 215L60 212 110 215 180 220 215 200 265 195 330 210 435 215 520 203 680 207 750 225 840 213 890 232 930 230 960 208 1020 203 1080 180 1215 155 1255 160 1300 187 1420 187"/>
            <path d="M5 150L3 215 20 300 42 350 45 430 90 510 100 550 150 585 160 610 195 620 260 690 300 710 440 718 490 752 525 755 600 800 640 840 705 870 765 942 820 955 890 1040 950 1070 1070 1160 1130 1170 1190 1195 1220 1235 1330 1283 1375 1270 1435 1260 1470 1300 1485 1335 1535 1395"/><path d="M155 610L132 680 155 750 172 810 145 910 90 975 80 1000"/>
            <path d="M105 1162L190 1172 265 1150 300 1133 360 1145 400 1133 515 1133 572 1117 640 1163 690 1128 735 1120 770 1080 790 1080 840 1045 880 1035"/><path d="M0 1250L40 1248M25 1250L30 1270 130 1335 145 1350 138 1420M165 1490L190 1500"/>
            <path d="M805 12L835 18 845 90 840 150 845 280 858 340 855 430M872 450L870 480 840 525 850 550 890 590 895 670 935 740 1010 790 1070 890 1072 920 1100 960 1095 1060M1075 1130L1068 1190 1115 1230 1130 1260 1105 1330 1095 1410 1060 1460 1030 1475"/>
            <path d="M1378 50L1360 50 1340 80 1335 150 1355 185 1312 240 1325 320 1280 420 1258 460 1260 510 1245 560 1243 630M1300 680L1365 765 1390 830 1410 920 1422 995 1460 1030 1470 1090V1140M1540 1115L1515 1118 1500 1140M1420 1185L1425 1290M1472 225L1480 260 1495 272M1515 228H1540"/>
          </g>
        </g>

        <!-- Settlements -->
        <g class="dots">
          <g><circle cx="1573.600" cy="538" r="4"/><circle cx="1310" cy="608" r="4"/><circle cx="2308" cy="508" r="4"/><circle cx="1957.500" cy="594" r="4"/><circle cx="2138" cy="954" r="4"/><circle cx="1742" cy="1052" r="4"/><circle cx="1328" cy="1046" r="4"/><circle cx="1280" cy="1094" r="4"/><circle cx="1176" cy="1126" r="4"/><circle cx="1172" cy="1308" r="4"/><circle cx="1544" cy="1324" r="4"/><circle cx="1716" cy="1512" r="4"/><circle cx="2185.600" cy="1190" r="4"/><circle cx="2381.600" cy="1218" r="4"/><circle cx="1974" cy="1244" r="4"/><circle cx="2305.700" cy="1404" r="4"/><circle cx="2228" cy="1492" r="4"/><circle cx="2106" cy="1531" r="4"/><circle cx="2328" cy="1531" r="4"/></g>
          <g><circle cx="1210" cy="466" r="5.500"/><circle cx="1183.500" cy="704" r="5.500"/><circle cx="2012" cy="742" r="5.500"/><circle cx="1616" cy="1366" r="5.500"/><circle cx="1864" cy="1450" r="5.500"/><circle cx="2463.600" cy="1432" r="5.500"/></g>
          <circle cx="1804" cy="1019.600" r="7"/><circle cx="1804" cy="1019.600" r="2.500" style="fill:#555"/>
        </g>
        <g class="place">
          <text x="1493.300" y="545.400" textLength="72">Rostock</text><text x="1277" y="631" textLength="65">Lübeck</text>
          <text class="big" x="1228" y="456" text-anchor="end">Kiel</text><text class="big" x="1237" y="694" text-anchor="end">Hamburg</text>
          <text x="2271" y="529" textLength="75.500">Koszalin</text><text x="1903.700" y="585.700" textLength="109">Świnoujście</text>
          <text class="big" x="1967" y="769" textLength="91.500">Szczecin</text><text x="2103" y="976.800" textLength="70">Gorzów</text><text x="2080" y="1001" textLength="117">Wielkopolski</text>
          <text class="big" x="1771" y="1006" textLength="64">Berlin</text><text x="1700.500" y="1075" textLength="82">Potsdam</text>
          <text class="big" x="1191.600" y="1049" text-anchor="end">Hannover</text><text x="1279" y="1069.600" textLength="96">Wolfsburg</text><text x="1214" y="1116.400" textLength="131.500">Braunschweig</text>
          <text x="1228" y="1149" text-anchor="end">Hildesheim</text><text x="1219" y="1301.400" text-anchor="end">Göttingen</text><text x="1487" y="1316" textLength="113">Halle (Saale)</text>
          <text class="big" x="1578" y="1355" textLength="77">Leipzig</text><text class="big" x="1819" y="1439.300" textLength="92">Dresden</text><text x="1671.500" y="1504" textLength="88.500">Chemnitz</text>
          <text x="2152" y="1158" textLength="68">Zielona</text><text x="2164" y="1181.400" textLength="45">Góra</text><text x="2349" y="1240" textLength="64">Leszno</text>
          <text x="1937" y="1266.400" textLength="73">Cottbus</text><text x="1922" y="1290.400" textLength="103">- Chóśebuz</text><text x="2271" y="1395" textLength="70">Legnica</text>
          <text class="big" x="2417.600" y="1422">Wrocław</text><text x="2197" y="1518" textLength="61.500">Jelenia</text><text x="2206" y="1541" textLength="45">Góra</text><text x="2072" y="1522" textLength="66">Liberec</text>
          <text x="1881" y="1529.600" textLength="76.500">Ústí nad</text><text x="1889" y="1552" textLength="62">Labem</text><text x="2281" y="1555" textLength="95">Wałbrzych</text>
          <text class="region" x="1598" y="546.800" textLength="132">Mecklenburg-</text><text class="region" x="1600" y="574" textLength="127">Vorpommern</text>
          <text class="region" x="2127" y="684.600" textLength="130">województwo</text><text class="region" x="2090" y="711" textLength="204">zachodniopomorskie</text>
          <text class="region" x="1424" y="1165.400" textLength="85">Sachsen-</text><text class="region" x="1434.800" y="1192.500" textLength="63">Anhalt</text>
          <text class="region" x="1375" y="1491.800" textLength="98">Thüringen</text><text class="region" x="1786" y="1491.800" textLength="77.500">Sachsen</text><text class="region" x="1874" y="1038.600" textLength="128.500">Brandenburg</text>
          <text class="region" x="2447" y="1050">województwo</text><text class="region" x="2447" y="1076.800">wielkopolskie</text>
          <text class="region" x="2079" y="1093.600" textLength="130">województwo</text><text class="region" x="2105" y="1120.400" textLength="80">lubuskie</text>
          <text class="region" x="2277" y="1473.600" textLength="130">województwo</text><text class="region" x="2282.700" y="1499" textLength="120">dolnośląskie</text>
        </g>
        <use href="#pin" x="1197" y="704"/><use href="#pin" x="1831" y="999"/><use href="#pin" x="1861" y="1438"/>
      </svg>
      <div class="zoomer position-absolute">
        <svg viewBox="0 0 60 59" stroke="#000" stroke-width="4.500"><path d="M19 34H43M31 22V46"/></svg>
        <svg viewBox="0 0 60 59" stroke="#000" stroke-width="4.500"><path d="M19 33H43"/></svg>
      </div>
      <div class="credit position-absolute"><svg viewBox="0 0 12 8"><path fill="#4c7be1" d="M0 0h12v4H0z"/><path fill="#ffd500" d="M0 4h12v4H0z"/></svg><a href="#">Leaflet</a> | © <a href="#">OpenStreetMap</a> contributors</div>
    </section>
  </div>
</main>

<footer class="site-footer d-flex flex-column align-items-center">
  <a class="logo" href="#">PawFinder</a>
  <nav class="menu d-flex"><a href="#">About us</a><a href="#">Find a pet</a><a href="#">Partners</a><a href="#">Contact</a></nav>
  <div class="social d-flex align-items-center">
    <svg width="18" height="32" viewBox="0 0 18 32" fill="#fff"><path d="M5.300 32V18H0V11.700H5.300V8Q5.300 0 13 0H18V5.300H14.500Q12.300 5.300 12.300 8V11.700H17.700L17 18H12.300V32Z"/></svg>
    <svg width="42" height="42" viewBox="0 0 42 42" fill="none" stroke="#fff"><rect x="1.900" y="1.900" width="38.200" height="38.200" rx="10.500" stroke-width="3.800"/><circle cx="21" cy="21" r="9.300" stroke-width="3.500"/><circle cx="32.200" cy="9.800" r="2.700" fill="#fff" stroke="none"/></svg>
  </div>
</footer>
<script src="https://cdn.jsdelivr.net/npm/bootstrap@5.3.0/dist/js/bootstrap.bundle.min.js"></script>
</body>
</html>
